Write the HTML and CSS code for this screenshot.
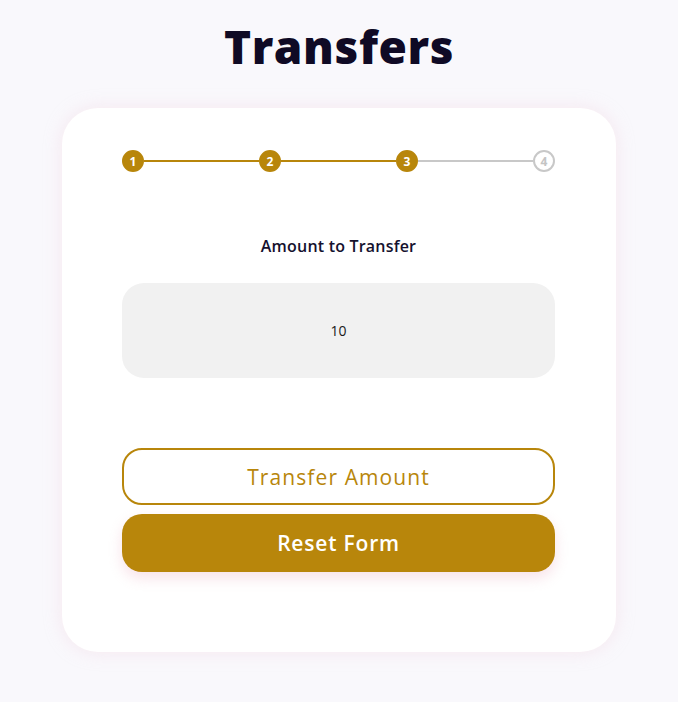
FILE: index.html
```html
<!DOCTYPE html>
<html>
<head>
<meta charset="utf-8">
<link rel="stylesheet" href="styles.css">
</head>
<body>
<h1 class="title">Transfers</h1>
<div class="card">
  <div class="stepper">
    <span class="step done">1</span>
    <span class="line done"></span>
    <span class="step done">2</span>
    <span class="line done"></span>
    <span class="step done">3</span>
    <span class="line"></span>
    <span class="step">4</span>
  </div>
  <div class="label">Amount to Transfer</div>
  <div class="input">10</div>
  <button class="btn outline">Transfer Amount</button>
  <button class="btn solid">Reset Form</button>
</div>
</body>
</html>
```
FILE: styles.css
```css
html, body { margin: 0; padding: 0; }
body {
  background: #f9f8fc;
  font-family: "Open Sans", "Noto Sans", sans-serif;
  width: 678px;
  height: 702px;
  overflow: hidden;
}
.title {
  margin: 0;
  padding-top: 18px;
  height: 90px;
  box-sizing: border-box;
  text-align: center;
  font-size: 46px;
  line-height: 56px;
  font-weight: 800;
  color: #0f0a25;
  letter-spacing: 0.6px;
}
.card {
  width: 554px;
  margin: 18px 0 0 62px;
  box-sizing: border-box;
  background: #fff;
  border-radius: 36px;
  padding: 42px 61px 80px 60px;
  box-shadow: 0 0 18px rgba(240, 200, 215, 0.35);
  display: flex;
  flex-direction: column;
}
.stepper {
  display: flex;
  align-items: center;
  height: 22px;
}
.step {
  width: 22px;
  height: 22px;
  box-sizing: border-box;
  border-radius: 50%;
  display: flex;
  align-items: center;
  justify-content: center;
  font-size: 12px;
  font-weight: 700;
  color: #c4c4c4;
  border: 2px solid #c8c8c8;
  background: #fff;
  flex: none;
}
.step.done {
  background: #b8860b;
  border-color: #b8860b;
  color: #fff;
}
.line {
  flex: 1;
  height: 2px;
  background: #c8c8c8;
}
.line.done { background: #b8860b; }
.label {
  margin-top: 63px;
  text-align: center;
  font-size: 16px;
  line-height: 22px;
  font-weight: 600;
  color: #15112e;
  letter-spacing: 0.2px;
}
.input {
  margin-top: 26px;
  height: 95px;
  border-radius: 22px;
  background: #f1f1f1;
  display: flex;
  align-items: center;
  justify-content: center;
  font-size: 14px;
  color: #1a1a1a;
}
.btn {
  font-family: inherit;
  height: 57px;
  border-radius: 20px;
  font-size: 21px;
  font-weight: 500;
  cursor: pointer;
  box-sizing: border-box;
}
.btn.outline {
  margin-top: 70px;
  background: #fff;
  border: 2px solid #b8860b;
  color: #b8860b;
  letter-spacing: 1.1px;
}
.btn.solid {
  margin-top: 9px;
  height: 58px;
  background: #b8860b;
  border: none;
  color: #fff;
  font-weight: 600;
  letter-spacing: 0.8px;
  box-shadow: 0 6px 14px rgba(240, 190, 205, 0.45);
}
```
